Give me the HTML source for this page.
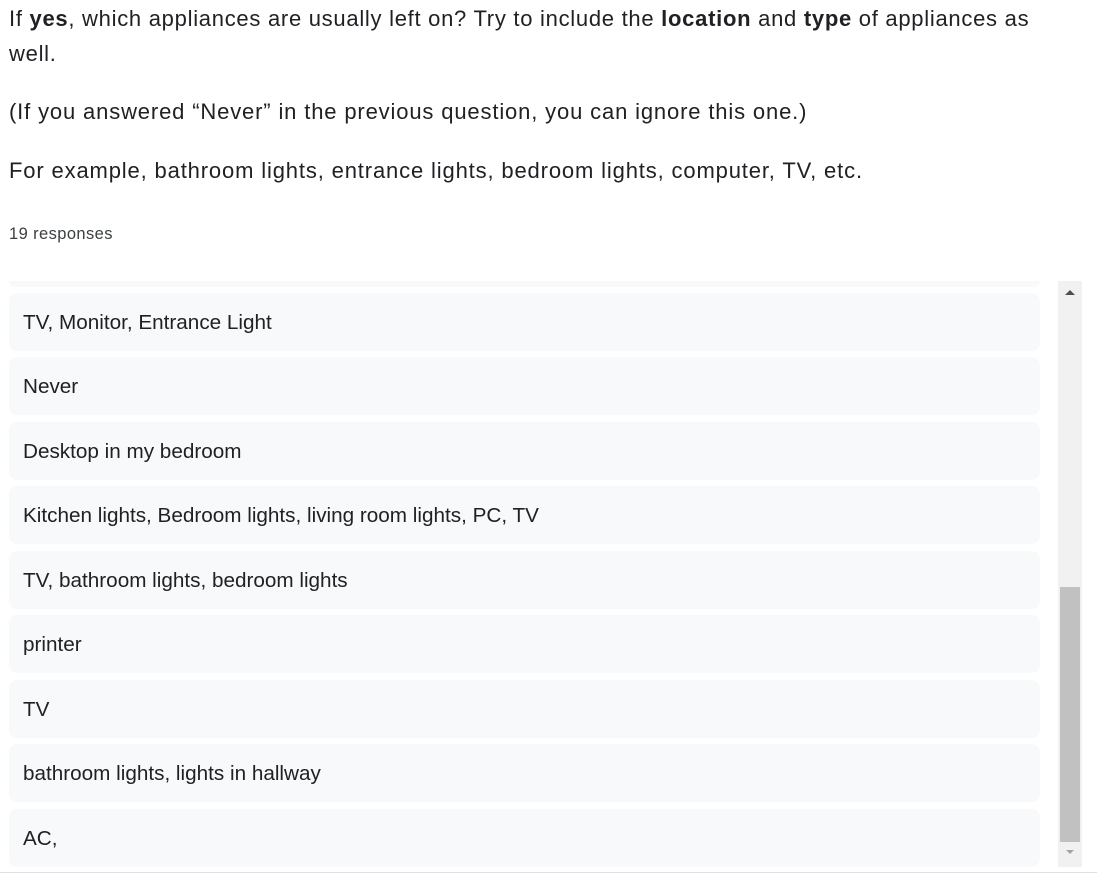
<!DOCTYPE html>
<html><head><meta charset="utf-8"><style>
body{margin:0;width:1108px;height:892px;background:#fff;font-family:"Liberation Sans",Roboto,Arial,sans-serif;color:#202124;position:relative;overflow:hidden}
.q{position:absolute;left:9px;width:1060px;font-size:22px;letter-spacing:0.85px;line-height:35px;white-space:nowrap}
.card{position:absolute;left:9px;width:1031px;height:58px;background:#f8f9fa;border-radius:8px;font-size:20.7px;line-height:60px;padding-left:14px;box-sizing:border-box}
</style></head><body>
<div class="q" style="top:1px;letter-spacing:0.72px">If <b>yes</b>, which appliances are usually left on? Try to include the <b>location</b> and <b>type</b> of appliances as<br>well.</div>
<div class="q" style="top:94px">(If you answered “Never” in the previous question, you can ignore this one.)</div>
<div class="q" style="top:153px">For example, bathroom lights, entrance lights, bedroom lights, computer, TV, etc.</div>
<div style="position:absolute;left:9px;top:225px;font-size:16.5px;letter-spacing:0.4px;color:#3c4043">19 responses</div>
<div style="position:absolute;left:9px;top:281px;width:1031px;height:6px;background:#f8f9fa;border-radius:0 0 8px 8px"></div>
<div class="card" style="top:293px">TV, Monitor, Entrance Light</div>
<div class="card" style="top:357px">Never</div>
<div class="card" style="top:422px">Desktop in my bedroom</div>
<div class="card" style="top:486px">Kitchen lights, Bedroom lights, living room lights, PC, TV</div>
<div class="card" style="top:551px">TV, bathroom lights, bedroom lights</div>
<div class="card" style="top:615px">printer</div>
<div class="card" style="top:680px">TV</div>
<div class="card" style="top:744px">bathroom lights, lights in hallway</div>
<div class="card" style="top:809px">AC,</div>
<div style="position:absolute;left:1058px;top:281px;width:24px;height:586px;background:#f1f1f1"></div>
<div style="position:absolute;left:1060px;top:587px;width:20px;height:255px;background:#c1c1c1"></div>
<div style="position:absolute;left:1065px;top:290px;width:0;height:0;border-left:5px solid transparent;border-right:5px solid transparent;border-bottom:5px solid #505050"></div>
<div style="position:absolute;left:1066px;top:850px;width:0;height:0;border-left:4px solid transparent;border-right:4px solid transparent;border-top:4px solid #a3a3a3"></div>
<div style="position:absolute;left:0;top:872px;width:1097px;height:1px;background:#e0dde8"></div>
</body></html>
